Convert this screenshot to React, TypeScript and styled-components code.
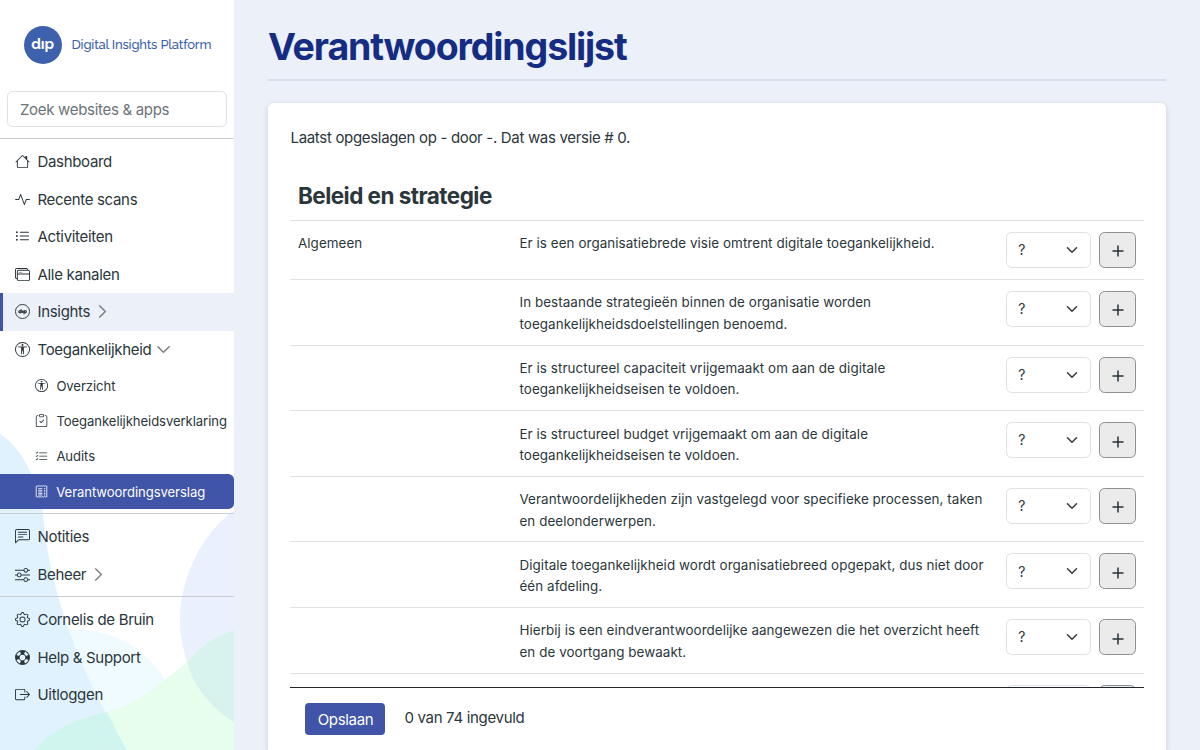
import React from 'react';
import styled, { createGlobalStyle } from 'styled-components';
import {
  BsActivity,
  BsBoxArrowRight,
  BsChatLeftText,
  BsChevronDown,
  BsChevronRight,
  BsClipboardCheck,
  BsGear,
  BsHouse,
  BsLifePreserver,
  BsListCheck,
  BsListUl,
  BsSliders,
  BsUniversalAccessCircle,
  BsWindowStack,
} from 'react-icons/bs';

const GlobalStyle = createGlobalStyle`
  *, *::before, *::after { box-sizing: border-box; }
  body {
    margin: 0;
    font-family: Inter, 'Liberation Sans', sans-serif;
    font-size: 15px;
    letter-spacing: -0.32px;
    color: #2b363b;
    background: #ebf0f9;
    overflow: hidden;
  }
  h1, h2, p { margin: 0; }
`;

const Page = styled.div`
  display: flex;
  height: 750px;
  overflow: hidden;
`;

const Sidebar = styled.aside`
  position: relative;
  isolation: isolate;
  width: 234.4px;
  flex: none;
  background: #fff;
`;

const Backdrop = styled.svg`
  position: absolute;
  left: 0;
  bottom: 0;
  z-index: -1;
`;

const Brand = styled.div`
  display: flex;
  align-items: center;
  height: 91px;
  padding: 0 0 2px 23.5px;
  gap: 10px;
  color: #3d61ad;
  font-family: Raleway, Lato, Inter, sans-serif;
`;

const BrandMark = styled.span`
  display: flex;
  justify-content: center;
  align-items: center;
  width: 38px;
  height: 38px;
  border-radius: 50%;
  background: #3d61ad;
  color: #fff;
  font-size: 15px;
  font-weight: 700;
  letter-spacing: -0.2px;
  padding-bottom: 2px;
`;

const BrandName = styled.span`
  font-size: 13px;
  font-weight: 500;
  letter-spacing: -0.19px;
  white-space: nowrap;
`;

const Search = styled.input`
  display: block;
  width: 219.4px;
  height: 36px;
  margin-left: 7.4px;
  padding: 0 11.5px;
  border: 1px solid #dee2e6;
  border-radius: 5.6px;
  background: #fff;
  font: 15px Inter, sans-serif;
  letter-spacing: -0.3px;
  &::placeholder { color: #6c7378; opacity: 1; }
`;

const Divider = styled.hr<{ $above?: number; $below?: number }>`
  height: 1px;
  border: 0;
  margin: ${(p) => p.$above ?? 4}px 0 ${(p) => p.$below ?? 4}px;
  background: #c9ced3;
`;

const NavItem = styled.a<{ $hover?: boolean }>`
  display: flex;
  align-items: center;
  height: 37.5px;
  padding-left: 15px;
  gap: 7.5px;
  white-space: nowrap;
  background: ${(p) => (p.$hover ? '#ebf0f9' : 'transparent')};
  box-shadow: ${(p) => (p.$hover ? 'inset 3px 0 #4054a8' : 'none')};
  > svg { flex: none; }
`;

const Chevron = styled.span`
  display: flex;
  color: #70777b;
  margin-left: -3px;
  svg { stroke: currentColor; stroke-width: 0.6; }
`;

const SubItem = styled.a<{ $active?: boolean }>`
  display: flex;
  align-items: center;
  height: 35.3px;
  padding-left: 34.5px;
  gap: 8.8px;
  font-size: 13.1px;
  letter-spacing: -0.07px;
  white-space: nowrap;
  color: ${(p) => (p.$active ? '#fff' : 'inherit')};
  background: ${(p) => (p.$active ? '#4054a8' : 'transparent')};
  border-radius: 0 5.6px 5.6px 0;
  > svg { flex: none; }
`;

const Main = styled.main`
  flex: 1;
  display: flex;
  flex-direction: column;
  padding: 24px 34px 0 33.6px;
`;

const Title = styled.h1`
  font-size: 37.5px;
  line-height: 45px;
  font-weight: 700;
  letter-spacing: -1.13px;
  color: #152c83;
`;

const TitleRule = styled.hr`
  width: 100%;
  height: 2px;
  border: 0;
  margin: 10px 0 22px;
  background: #d9dee8;
`;

const Card = styled.section`
  flex: 1;
  display: flex;
  flex-direction: column;
  min-height: 0;
  padding: 24px 22.5px 0;
  background: #fff;
  border-radius: 5.6px 5.6px 0 0;
  box-shadow: 0 2px 6px rgba(0, 0, 0, 0.14);
`;

const SavedNote = styled.p`
  line-height: 22.5px;
`;

const Checklist = styled.div`
  height: 538.5px;
  overflow: hidden;
  border-bottom: 1px solid #212529;
`;

const SectionTitle = styled.h2`
  padding: 32px 7.5px 11.4px;
  font-size: 22.5px;
  line-height: 27px;
  font-weight: 700;
  letter-spacing: -0.54px;
`;

const Row = styled.div<{ $single?: boolean }>`
  display: grid;
  grid-template-columns: 221.5px 1fr 129.8px;
  align-items: start;
  height: ${(p) => (p.$single ? 59.1 : 65.62)}px;
  padding: 12.4px 7.5px 0;
  border-top: 1px solid #dee2e6;
  font-size: 13.4px;
  line-height: 21.5px;
  letter-spacing: 0.07px;
`;

const Question = styled.span`
  white-space: pre-line;
`;

const Controls = styled.div`
  display: flex;
  gap: 8px;
  margin-top: -1.4px;
`;

const Picker = styled.div`
  display: flex;
  justify-content: space-between;
  align-items: center;
  width: 85px;
  height: 36px;
  padding: 0 12.5px 0 11px;
  border: 1px solid #dee2e6;
  border-radius: 5.6px;
  font-size: 14px;
`;

const AddButton = styled.button`
  display: flex;
  justify-content: center;
  align-items: center;
  width: 37px;
  height: 36px;
  padding: 3px 0 0;
  border: 1px solid #8b9092;
  border-radius: 5.6px;
  background: #ebebeb;
  color: #263238;
`;

const Footer = styled.footer`
  display: flex;
  padding: 15px 15px 0;
  gap: 19px;
`;

const SaveButton = styled.button`
  width: 80px;
  height: 32px;
  padding: 0;
  border: 0;
  border-radius: 4px;
  background: #4054a8;
  color: #fff;
  font: 15px Inter, sans-serif;
  letter-spacing: -0.33px;
`;

const Progress = styled.span`
  line-height: 29px;
`;

const InsightsIcon = () => (
  <svg width="15" height="15" viewBox="0 0 16 16" fill="none" stroke="currentColor">
    <circle cx="8" cy="8" r="7.5" />
    <circle cx="5.3" cy="8.2" r="1.2" strokeWidth="1.2" />
    <path d="M6.6 5.6v3.9M8.1 7v2.5M9.6 7v3.8" strokeWidth="1.2" />
    <circle cx="10.9" cy="8.2" r="1.2" strokeWidth="1.2" />
  </svg>
);

const ReportIcon = () => (
  <svg width="13" height="13" viewBox="0 0 16 16" fill="none" stroke="currentColor">
    <path d="M1.5 1.5l1-.6 1.2.6 1.2-.6 1.3.6 1.3-.6 1.3.6 1.3-.6 1.2.6 1.2-.6 1.2.6.8-.4v13.6l-.8-.4-1.2.6-1.2-.6-1.2.6-1.3-.6-1.3.6-1.3-.6-1.3.6-1.2-.6-1.2.6-1-.6z" />
    <path d="M4 4.5h5M4 6.5h5M4 8.5h5M4 10.5h5M4 12.3h5M11 4.5h1.7M11 6.5h1.7M11 8.5h1.7M11 10.5h1.7M11 12.3h1.7" />
  </svg>
);

const SelectArrow = () => (
  <svg width="12" height="12" viewBox="0 0 16 16" fill="none" stroke="#343a40" strokeWidth="2" strokeLinecap="round" strokeLinejoin="round">
    <path d="m2 5 6 6 6-6" />
  </svg>
);

const PlusIcon = () => (
  <svg width="12" height="12" viewBox="0 0 12 12" stroke="currentColor" strokeWidth="1.5">
    <path d="M6 .5v11M.5 6h11" />
  </svg>
);

const questions = [
  'Er is een organisatiebrede visie omtrent digitale toegankelijkheid.',
  'In bestaande strategieën binnen de organisatie worden\ntoegankelijkheidsdoelstellingen benoemd.',
  'Er is structureel capaciteit vrijgemaakt om aan de digitale\ntoegankelijkheidseisen te voldoen.',
  'Er is structureel budget vrijgemaakt om aan de digitale\ntoegankelijkheidseisen te voldoen.',
  'Verantwoordelijkheden zijn vastgelegd voor specifieke processen, taken\nen deelonderwerpen.',
  'Digitale toegankelijkheid wordt organisatiebreed opgepakt, dus niet door\néén afdeling.',
  'Hierbij is een eindverantwoordelijke aangewezen die het overzicht heeft\nen de voortgang bewaakt.',
  '',
];

export default function App() {
  return (
    <Page>
      <GlobalStyle />
      <Sidebar>
        <Backdrop width="234.4" height="350" viewBox="0 400 234.4 350">
          <path d="M60 630C105 625 145 645 166 682L105 720Z" fill="#f0fbff" />
          <path d="M0 434C25 450 38 485 43 513C49 590 78 670 127 750H0Z" fill="#e0f2fe" />
          <path d="M234.5 510C200 535 180 580 180 620C180 665 205 705 234.5 723Z" fill="#eaf0fe" />
          <path d="M35 750C52 728 80 718 107 712C135 704 153 690 187 662C203 643 217 636 234.5 630V750Z" fill="#e7feed" />
          <path d="M35 750C52 728 80 718 107 712Q116 732 127 750Z" fill="#d0f4ee" />
          <path d="M187 662C203 643 217 636 234.5 630V723C212 708 194 688 187 662Z" fill="#d8f3ed" />
        </Backdrop>
        <Brand>
          <BrandMark>dıp</BrandMark>
          <BrandName>Digital Insights Platform</BrandName>
        </Brand>
        <Search placeholder="Zoek websites & apps" />
        <Divider $above={11} $below={4} />
        <NavItem><BsHouse />Dashboard</NavItem>
        <NavItem><BsActivity />Recente scans</NavItem>
        <NavItem><BsListUl />Activiteiten</NavItem>
        <NavItem><BsWindowStack />Alle kanalen</NavItem>
        <NavItem $hover><InsightsIcon />Insights<Chevron><BsChevronRight /></Chevron></NavItem>
        <NavItem><BsUniversalAccessCircle />Toegankelijkheid<Chevron><BsChevronDown /></Chevron></NavItem>
        <SubItem><BsUniversalAccessCircle />Overzicht</SubItem>
        <SubItem><BsClipboardCheck />Toegankelijkheidsverklaring</SubItem>
        <SubItem><BsListCheck />Audits</SubItem>
        <SubItem $active><ReportIcon />Verantwoordingsverslag</SubItem>
        <Divider $above={3.6} />
        <NavItem><BsChatLeftText />Notities</NavItem>
        <NavItem><BsSliders />Beheer<Chevron><BsChevronRight /></Chevron></NavItem>
        <Divider $above={3} />
        <NavItem><BsGear />Cornelis de Bruin</NavItem>
        <NavItem><BsLifePreserver />Help &amp; Support</NavItem>
        <NavItem><BsBoxArrowRight />Uitloggen</NavItem>
      </Sidebar>
      <Main>
        <Title>Verantwoordingslijst</Title>
        <TitleRule />
        <Card>
          <SavedNote>Laatst opgeslagen op - door -. Dat was versie # 0.</SavedNote>
          <Checklist>
            <SectionTitle>Beleid en strategie</SectionTitle>
            {questions.map((question, i) => (
              <Row key={i} $single={i === 0}>
                <span>{i === 0 ? 'Algemeen' : ''}</span>
                <Question>{question}</Question>
                <Controls>
                  <Picker>{question && '?'}<SelectArrow /></Picker>
                  <AddButton><PlusIcon /></AddButton>
                </Controls>
              </Row>
            ))}
          </Checklist>
          <Footer>
            <SaveButton>Opslaan</SaveButton>
            <Progress>0 van 74 ingevuld</Progress>
          </Footer>
        </Card>
      </Main>
    </Page>
  );
}
